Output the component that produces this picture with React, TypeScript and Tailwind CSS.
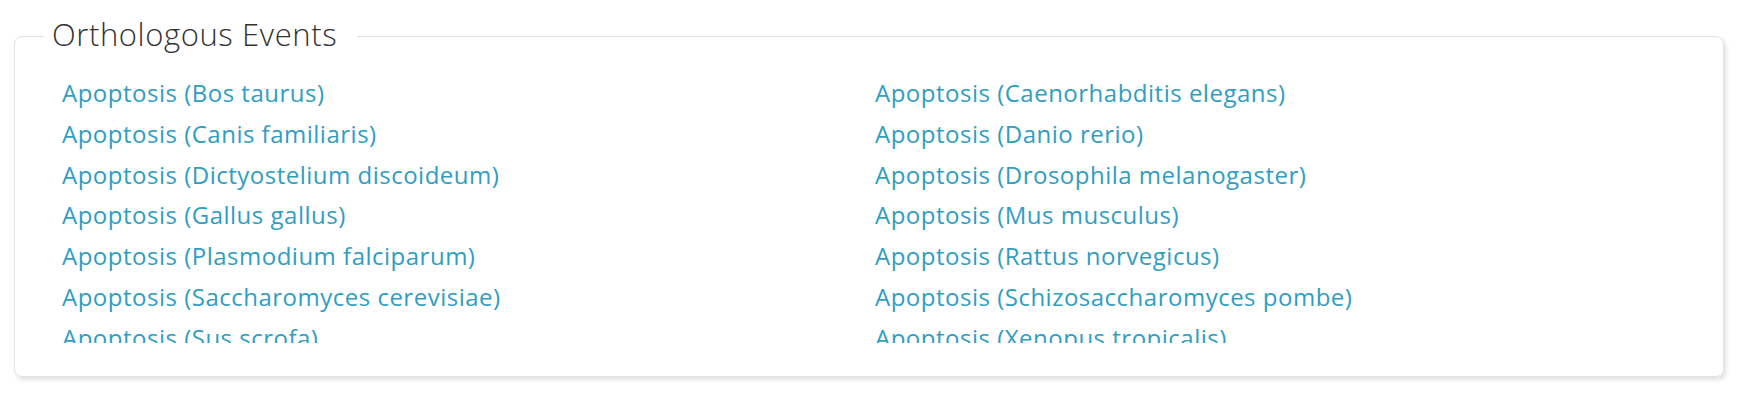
const species = [
  "Bos taurus",
  "Caenorhabditis elegans",
  "Canis familiaris",
  "Danio rerio",
  "Dictyostelium discoideum",
  "Drosophila melanogaster",
  "Gallus gallus",
  "Mus musculus",
  "Plasmodium falciparum",
  "Rattus norvegicus",
  "Saccharomyces cerevisiae",
  "Schizosaccharomyces pombe",
  "Sus scrofa",
  "Xenopus tropicalis",
];

export default function App() {
  return (
    <div className="bg-white w-[1750px] h-[406px] pt-[14px] pl-[14px] pr-[26px]" style={{ fontFamily: '"Open Sans", sans-serif' }}>
      {/* ORTHOLOGOUS EVENTS PANEL */}
      <fieldset className="border border-[#e3e3e3] rounded-[8px] shadow-[2px_3px_4px_rgba(0,0,0,0.12)] pb-[33px]">
        <legend className="ml-[29px] pl-[8px] pr-[20px] pb-[3px] text-[31px] font-light tracking-[0.6px] text-[#333] leading-[41px]">
          Orthologous Events
        </legend>
        <div className="mt-[15px] h-[270px] overflow-hidden pl-[47px] pr-[20px]">
          <div className="grid grid-cols-[813px_1fr]">
            {species.map((s) => (
              <a
                key={s}
                href="#"
                className="text-[24px] leading-[40.8px] tracking-[0.5px] text-[#2f9ec2] whitespace-nowrap"
              >
                Apoptosis ({s})
              </a>
            ))}
          </div>
        </div>
      </fieldset>
    </div>
  );
}
